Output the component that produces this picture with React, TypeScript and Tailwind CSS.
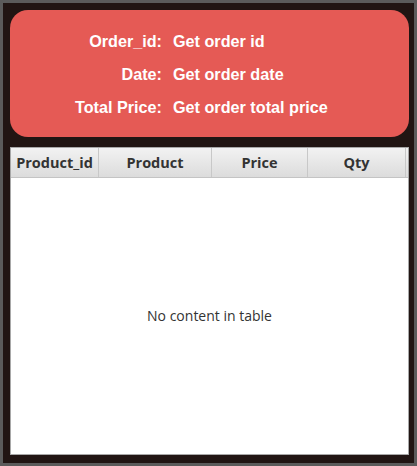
import React from "react";

const columns = [
  { label: "Product_id", width: "w-[88px]" },
  { label: "Product", width: "w-[113px]" },
  { label: "Price", width: "w-[96px]" },
  { label: "Qty", width: "w-[98px]" },
];

const summary = [
  { label: "Order_id:", value: "Get order id" },
  { label: "Date:", value: "Get order date" },
  { label: "Total Price:", value: "Get order total price" },
];

const App = () => {
  return (
    <div className="w-[417px] h-[466px] border-[3px] border-[#5b5b5b] bg-[#211513] pt-[7px] pl-[7px] pr-[5px] pb-[8px] flex flex-col gap-[10px]">
      {/* Order summary */}
      <div className="h-[127px] shrink-0 rounded-[18px] bg-[#e55a55] flex flex-col justify-center gap-[13px] pt-[2px] font-['Liberation_Sans',Arial,sans-serif] font-bold text-[16.2px] text-white">
        {summary.map((row) => (
          <div key={row.label} className="flex items-center h-[20px]">
            <span className="w-[152px] text-right">{row.label}</span>
            <span className="ml-[11px]">{row.value}</span>
          </div>
        ))}
      </div>

      {/* Items table */}
      <div className="flex-1 flex flex-col bg-white border border-[#a8a8a8] font-['Open_Sans','Liberation_Sans',sans-serif]">
        <div className="flex h-[30px] shrink-0 bg-gradient-to-b from-[#f2f2f2] to-[#dcdcdc] border-b border-[#c4c4c4]">
          {columns.map((col) => (
            <div
              key={col.label}
              className={`${col.width} shrink-0 flex items-center justify-center border-r border-[#c8c8c8] text-[14.5px] font-bold text-[#333]`}
            >
              {col.label}
            </div>
          ))}
          <div className="flex-1" />
        </div>
        <div className="flex-1 flex items-center justify-center pb-[2px] text-[14px] text-[#333]">
          No content in table
        </div>
      </div>
    </div>
  );
};

export default App;
